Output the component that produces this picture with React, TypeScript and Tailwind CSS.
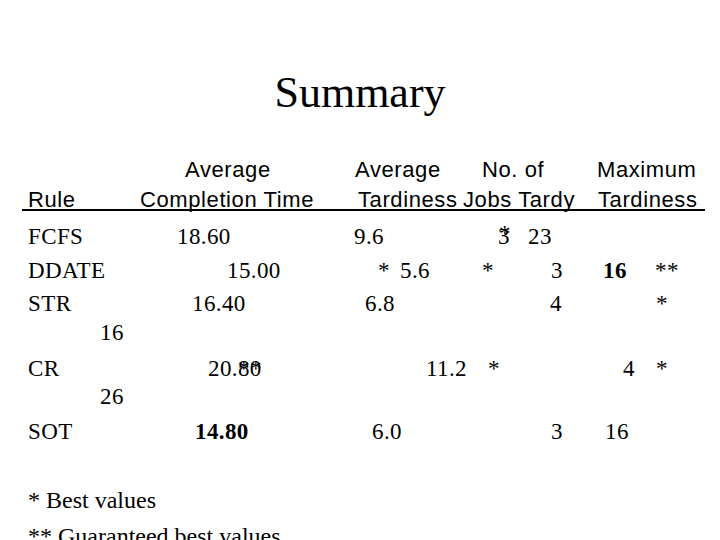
import React from "react";

const serif = "font-['Liberation_Serif','Times_New_Roman',serif] text-[23px] leading-[32px] tracking-[0.4px]";
const sans = "font-['Liberation_Sans',Arial,sans-serif] text-[22px] leading-[30px] tracking-[0.6px]";

export default function App() {
  return (
    <div className="w-[720px] h-[540px] bg-white text-black overflow-hidden">
      <div className="pt-[71px]">
        <h1 className="text-center font-['Liberation_Serif','Times_New_Roman',serif] text-[44px] leading-[44px] font-normal">
          Summary
        </h1>
      </div>

      <div className={`mt-[40px] ${sans}`}>
        <div className="flex h-[30px] whitespace-nowrap">
          <span className="ml-[185px] w-[170px] shrink-0">Average</span>
          <span className="w-[127px] shrink-0">Average</span>
          <span className="w-[115px] shrink-0">No. of</span>
          <span className="shrink-0">Maximum</span>
        </div>
        <div className="flex h-[30px] whitespace-nowrap">
          <span className="ml-[28px] w-[112px] shrink-0">Rule</span>
          <span className="w-[218px] shrink-0">Completion Time</span>
          <span className="w-[105px] shrink-0">Tardiness</span>
          <span className="w-[135px] shrink-0">Jobs Tardy</span>
          <span className="shrink-0">Tardiness</span>
        </div>
      </div>
      <div className="relative ml-[22px] -mt-[6px] h-[2px] w-[683px] bg-black" />

      <div className={`mt-[10px] ${serif}`}>
        <div className="flex h-[34px] whitespace-nowrap">
          <span className="ml-[28px] w-[149px] shrink-0">FCFS</span>
          <span className="w-[177px] shrink-0">18.60</span>
          <span className="w-[144px] shrink-0">9.6</span>
          <span className="relative w-[30px] shrink-0">
            3<span className="absolute left-[1px] -top-[3px]">*</span>
          </span>
          <span className="shrink-0">23</span>
        </div>
        <div className="flex h-[33px] whitespace-nowrap">
          <span className="ml-[28px] w-[199px] shrink-0">DDATE</span>
          <span className="w-[151px] shrink-0">15.00</span>
          <span className="w-[22px] shrink-0">*</span>
          <span className="w-[82px] shrink-0">5.6</span>
          <span className="w-[69px] shrink-0">*</span>
          <span className="w-[52px] shrink-0">3</span>
          <span className="w-[52px] shrink-0 font-bold">16</span>
          <span className="shrink-0">**</span>
        </div>
        <div className="flex h-[29px] whitespace-nowrap">
          <span className="ml-[28px] w-[164px] shrink-0">STR</span>
          <span className="w-[173px] shrink-0">16.40</span>
          <span className="w-[185px] shrink-0">6.8</span>
          <span className="w-[106px] shrink-0">4</span>
          <span className="shrink-0">*</span>
        </div>
        <div className="flex h-[36px] whitespace-nowrap">
          <span className="ml-[100px] shrink-0">16</span>
        </div>
        <div className="flex h-[28px] whitespace-nowrap">
          <span className="ml-[28px] w-[180px] shrink-0">CR</span>
          <span className="relative w-[218px] shrink-0">
            20.80<span className="absolute left-[30px] top-0">**</span>
          </span>
          <span className="w-[62px] shrink-0">11.2</span>
          <span className="w-[135px] shrink-0">*</span>
          <span className="w-[33px] shrink-0">4</span>
          <span className="shrink-0">*</span>
        </div>
        <div className="flex h-[35px] whitespace-nowrap">
          <span className="ml-[100px] shrink-0">26</span>
        </div>
        <div className="flex h-[32px] whitespace-nowrap">
          <span className="ml-[28px] w-[167px] shrink-0">SOT</span>
          <span className="w-[177px] shrink-0 font-bold">14.80</span>
          <span className="w-[179px] shrink-0">6.0</span>
          <span className="w-[54px] shrink-0">3</span>
          <span className="shrink-0">16</span>
        </div>
      </div>

      <div className="mt-[34px] pl-[28px] font-['Liberation_Serif','Times_New_Roman',serif] text-[24px] leading-[36px] whitespace-nowrap">
        <div>* Best values</div>
        <div>** Guaranteed best values</div>
      </div>
    </div>
  );
}
